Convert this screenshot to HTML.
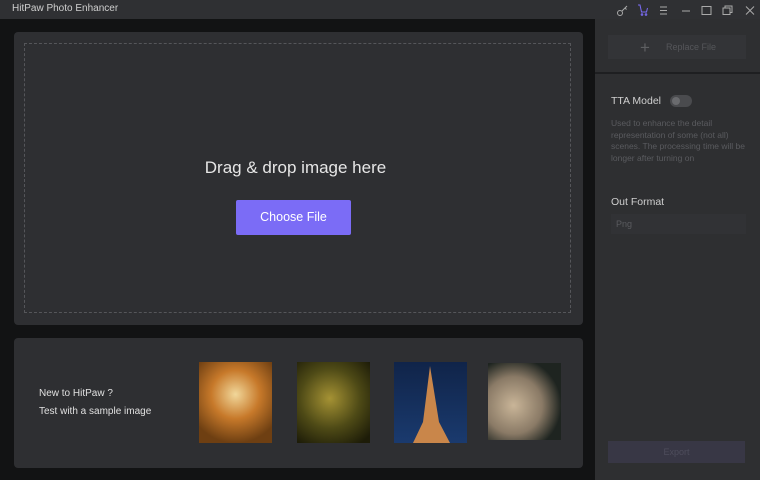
<!DOCTYPE html>
<html><head><meta charset="utf-8"><style>
*{margin:0;padding:0;box-sizing:border-box}
body{width:760px;height:480px;background:#121314;font-family:"Liberation Sans",sans-serif;position:relative;overflow:hidden}
.a{position:absolute}
</style></head><body>
<div class="a" style="left:0;top:0;width:760px;height:19px;background:#2f3033"></div>
<div class="a" style="left:12px;top:3px;font-size:10px;color:#cfcfcf">HitPaw Photo Enhancer</div>
<svg class="a" style="left:610px;top:2px" width="150" height="16" viewBox="0 0 150 16" fill="none" stroke="#aaa" stroke-width="1">
<circle cx="10" cy="11" r="2.5"/><path d="M12 9l5-5M15 6l1.5 1.5"/>
<path d="M28 3h2l1.5 7h5l1-4" stroke="#7b6cf6"/><circle cx="32" cy="12.5" r="0.8" stroke="#7b6cf6"/><circle cx="36" cy="12.5" r="0.8" stroke="#7b6cf6"/>
<path d="M50 5h7M50 8.5h7M50 12h7"/>
<path d="M72 9h8"/>
<rect x="92" y="4.5" width="9" height="8"/>
<rect x="113" y="6" width="7" height="6.5"/><path d="M115 6V4h7v6.5h-2"/>
<path d="M136 4.5l8 8M144 4.5l-8 8"/>
</svg>
<div class="a" style="left:14px;top:32px;width:569px;height:293px;background:#2e2f32;border-radius:4px"></div>
<div class="a" style="left:24px;top:43px;width:547px;height:270px;border:1px dashed #55565a"></div>
<div class="a" style="left:0;width:591px;top:158px;text-align:center;font-size:17px;color:#e6e6e6">Drag &amp; drop image here</div>
<div class="a" style="left:236px;top:200px;width:115px;height:35px;background:#7b6cf6;color:#fff;font-size:12.5px;line-height:35px;text-align:center;border-radius:2px">Choose File</div>
<div class="a" style="left:14px;top:338px;width:569px;height:130px;background:#2e2f32;border-radius:4px"></div>
<div class="a" style="left:39px;top:385px;font-size:10px;color:#e0e0e0;line-height:18px">New to HitPaw ?<br>Test with a sample image</div>
<div class="a" style="left:199px;top:362px;width:73px;height:81px;background:radial-gradient(circle at 50% 40%,#f1d79a,#c7792a 40%,#6e3f12 80%)"></div>
<div class="a" style="left:297px;top:362px;width:73px;height:81px;background:radial-gradient(circle at 45% 45%,#a59234,#4e4a16 50%,#1d1c08 90%)"></div>
<div class="a" style="left:394px;top:362px;width:73px;height:81px;background:linear-gradient(#102449,#1a3a6e)"></div>
<svg class="a" style="left:394px;top:362px" width="73" height="81"><path d="M36 4L29 60L19 81H56L45 60Z" fill="#c9864a"/></svg>
<div class="a" style="left:488px;top:363px;width:73px;height:77px;background:radial-gradient(circle at 35% 55%,#c9b598,#8a7a66 45%,#1e2420 75%)"></div>
<div class="a" style="left:595px;top:19px;width:165px;height:461px;background:#2e2f31"></div>
<div class="a" style="left:595px;top:72px;width:165px;height:2px;background:#1e1f21"></div>
<div class="a" style="left:608px;top:35px;width:138px;height:24px;background:#333437"></div>
<div class="a" style="left:640px;top:38px;font-size:17px;color:#5e5f62">+</div>
<div class="a" style="left:666px;top:42px;font-size:9px;color:#55565a">Replace File</div>
<div class="a" style="left:611px;top:95px;font-size:10.5px;color:#cfcfcf">TTA Model</div>
<div class="a" style="left:670px;top:95px;width:22px;height:12px;border-radius:6px;background:#4a4b4e"></div>
<div class="a" style="left:672px;top:97px;width:8px;height:8px;border-radius:50%;background:#6a6b6e"></div>
<div class="a" style="left:611px;top:118px;width:140px;font-size:8.5px;line-height:11.5px;color:#5a5b5f">Used to enhance the detail representation of some (not all) scenes. The processing time will be longer after turning on</div>
<div class="a" style="left:611px;top:196px;font-size:10.5px;color:#cfcfcf">Out Format</div>
<div class="a" style="left:611px;top:214px;width:135px;height:20px;background:#313235"></div>
<div class="a" style="left:616px;top:219px;font-size:9px;color:#5a5b5f">Png</div>
<div class="a" style="left:608px;top:441px;width:137px;height:22px;background:#383745"></div>
<div class="a" style="left:608px;top:447px;width:137px;text-align:center;font-size:9px;color:#4e4d5c">Export</div>
</body></html>
